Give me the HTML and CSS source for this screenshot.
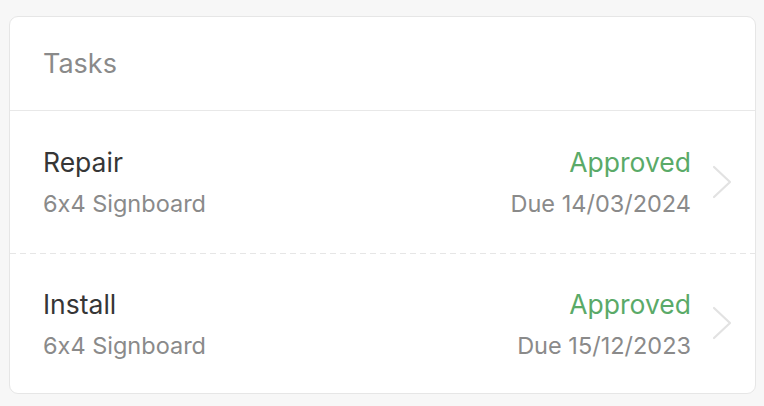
FILE: index.html
```html
<!DOCTYPE html>
<html>
<head>
<meta charset="utf-8">
<link rel="stylesheet" href="styles.css">
</head>
<body>
<div class="card">
  <div class="card-header">Tasks</div>
  <div class="task">
    <div class="task-main">
      <div class="task-title">Repair</div>
      <div class="task-sub">6x4 Signboard</div>
    </div>
    <div class="task-meta">
      <div class="task-status">Approved</div>
      <div class="task-due">Due 14/03/2024</div>
    </div>
    <svg class="chevron" viewBox="0 0 20 34" width="20" height="34"><path d="M2 2 L18 17 L2 32" fill="none" stroke="#e2e2e2" stroke-width="2.2" stroke-linecap="round" stroke-linejoin="round"/></svg>
  </div>
  <div class="task">
    <div class="task-main">
      <div class="task-title">Install</div>
      <div class="task-sub">6x4 Signboard</div>
    </div>
    <div class="task-meta">
      <div class="task-status">Approved</div>
      <div class="task-due">Due 15/12/2023</div>
    </div>
    <svg class="chevron" viewBox="0 0 20 34" width="20" height="34"><path d="M2 2 L18 17 L2 32" fill="none" stroke="#e2e2e2" stroke-width="2.2" stroke-linecap="round" stroke-linejoin="round"/></svg>
  </div>
</div>
</body>
</html>
```
FILE: styles.css
```css
html, body {
  margin: 0;
  background: #f7f7f7;
}
body {
  padding: 16px 8px 0 9px;
  font-family: Inter, "Noto Sans", sans-serif;
  font-feature-settings: "calt" 0;
}
.card {
  background: #fff;
  border: 1px solid #e6e6e6;
  border-radius: 9px;
  overflow: hidden;
}
.card-header {
  padding: 31px 33px 30px;
  font-size: 27px;
  line-height: 32px;
  color: #8a8a8a;
  border-bottom: 1px solid #e8e8e8;
}
.task {
  display: flex;
  align-items: flex-start;
  height: 142px;
  box-sizing: border-box;
  padding: 35px 23px 0 33px;
}
.task + .task {
  height: 140px;
  background-image: linear-gradient(to right, #e6e6e6 60%, transparent 60%);
  background-size: 10px 1px;
  background-repeat: repeat-x;
  background-position: 0 0;
}
.task-main {
  flex: 1;
  display: flex;
  flex-direction: column;
  gap: 9.5px;
}
.task-meta {
  display: flex;
  flex-direction: column;
  align-items: flex-end;
  gap: 9.5px;
  margin-right: 21px;
}
.task-title {
  font-size: 26.5px;
  line-height: 32px;
  color: #363636;
}
.task-sub, .task-due {
  font-size: 23.5px;
  line-height: 32px;
  color: #8a8a8a;
}
.task-status {
  font-size: 26.5px;
  line-height: 32px;
  color: #5aaa68;
}
.chevron {
  flex: none;
  display: block;
  align-self: center;
  margin-top: -35px;
}
```
